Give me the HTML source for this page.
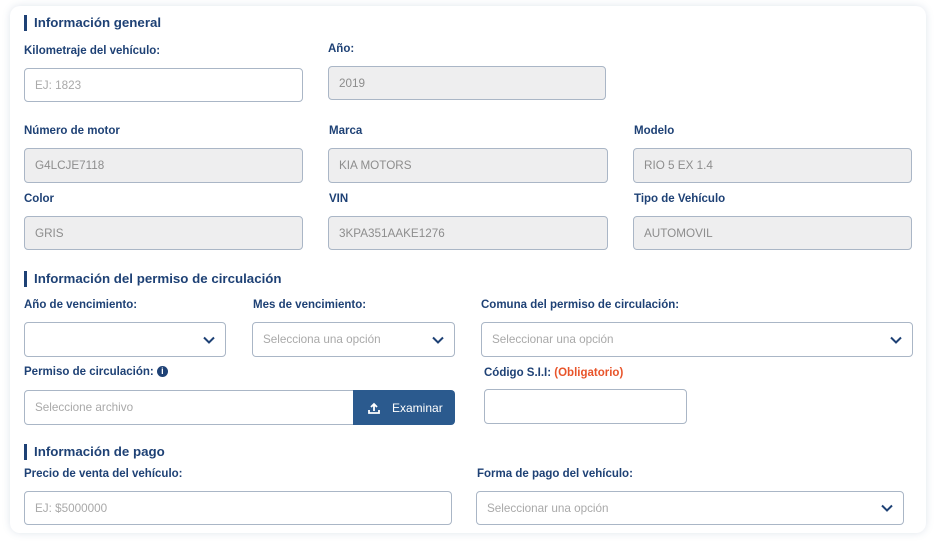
<!DOCTYPE html><html><head><meta charset="utf-8"><style>
body{margin:0;width:938px;height:548px;background:#fff;font-family:"Liberation Sans",sans-serif;position:relative;overflow:hidden}
.card{position:absolute;left:10px;top:6px;width:916px;height:527px;background:#fff;border-radius:10px;box-shadow:0 0 8px rgba(80,110,150,.18)}
.h{position:absolute;font-size:13.3px;font-weight:bold;color:#1e4175;border-left:3px solid #1e4175;padding-left:7px;line-height:16px}
.l{position:absolute;font-size:11.5px;font-weight:bold;color:#1e4175}
.i{position:absolute;box-sizing:border-box;border:1px solid #aab6c6;border-radius:4px;background:#fff;font-size:11.7px;color:#a9a9a9;padding-left:10px;display:flex;align-items:center}
.g{background:#eeeeef;color:#8d8d8d}
.ch{position:absolute;right:10px;top:50%;margin-top:-4px}
</style></head><body><div class="card"></div>
<div class="h" style="left:24px;top:15px">Información general</div>
<div class="l" style="left:24px;top:45px">Kilometraje del vehículo:</div>
<div class="i" style="left:24px;top:68px;width:279px;height:34px">EJ: 1823</div>
<div class="l" style="left:328px;top:43px">Año:</div>
<div class="i g" style="left:328px;top:66px;width:278px;height:34px">2019</div>
<div class="l" style="left:24px;top:125px">Número de motor</div>
<div class="l" style="left:329px;top:125px">Marca</div>
<div class="l" style="left:634px;top:125px">Modelo</div>
<div class="i g" style="left:24px;top:148px;width:279px;height:35px">G4LCJE7118</div>
<div class="i g" style="left:328px;top:148px;width:280px;height:35px">KIA MOTORS</div>
<div class="i g" style="left:633px;top:148px;width:279px;height:35px">RIO 5 EX 1.4</div>
<div class="l" style="left:24px;top:193px">Color</div>
<div class="l" style="left:329px;top:193px">VIN</div>
<div class="l" style="left:634px;top:193px">Tipo de Vehículo</div>
<div class="i g" style="left:24px;top:216px;width:279px;height:34px">GRIS</div>
<div class="i g" style="left:328px;top:216px;width:280px;height:34px">3KPA351AAKE1276</div>
<div class="i g" style="left:633px;top:216px;width:279px;height:34px">AUTOMOVIL</div>
<div class="h" style="left:24px;top:271px">Información del permiso de circulación</div>
<div class="l" style="left:24px;top:299px">Año de vencimiento:</div>
<div class="l" style="left:253px;top:299px">Mes de vencimiento:</div>
<div class="l" style="left:481px;top:299px">Comuna del permiso de circulación:</div>
<svg width="0" height="0" style="position:absolute"><defs><path id="cv" d="M1 1.5l5 5 5-5" fill="none" stroke="#1e4175" stroke-width="2"/></defs></svg>
<div class="i" style="left:24px;top:322px;width:202px;height:35px"><svg class="ch" width="12" height="8"><use href="#cv"/></svg></div>
<div class="i" style="left:252px;top:322px;width:203px;height:35px">Selecciona una opción<svg class="ch" width="12" height="8"><use href="#cv"/></svg></div>
<div class="i" style="left:481px;top:322px;width:432px;height:35px">Seleccionar una opción<svg class="ch" width="12" height="8"><use href="#cv"/></svg></div>
<div class="l" style="left:24px;top:366px">Permiso de circulación: <span style="display:inline-block;width:11px;height:11px;border-radius:50%;background:#1e4175;color:#fff;font-size:9px;text-align:center;line-height:11px;vertical-align:1px">i</span></div>
<div class="l" style="left:484px;top:367px">Código S.I.I: <span style="color:#e8542a">(Obligatorio)</span></div>
<div class="i" style="left:24px;top:390px;width:331px;height:35px;border-radius:4px 0 0 4px">Seleccione archivo</div>
<div style="position:absolute;left:353px;top:390px;width:102px;height:35px;background:#2b5a8e;border-radius:0 4px 4px 0;color:#fff;font-size:12px;display:flex;align-items:center"><svg style="margin:0 12px 0 15px" width="12" height="12"><path d="M6 9V2M3 5l3-3 3 3M1 8v3h10V8" fill="none" stroke="#fff" stroke-width="1.8"/></svg>Examinar</div>
<div class="i" style="left:484px;top:389px;width:203px;height:35px"></div>
<div class="h" style="left:24px;top:444px">Información de pago</div>
<div class="l" style="left:24px;top:468px">Precio de venta del vehículo:</div>
<div class="l" style="left:477px;top:468px">Forma de pago del vehículo:</div>
<div class="i" style="left:24px;top:491px;width:428px;height:34px">EJ: $5000000</div>
<div class="i" style="left:476px;top:491px;width:428px;height:34px">Seleccionar una opción<svg class="ch" width="12" height="8"><use href="#cv"/></svg></div>
</body></html>
